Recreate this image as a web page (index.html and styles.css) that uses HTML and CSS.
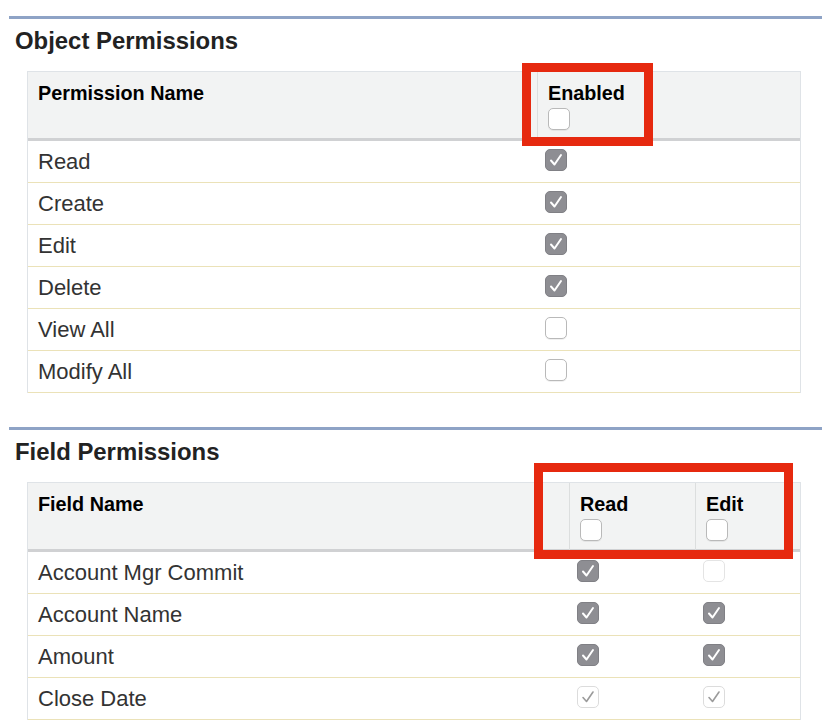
FILE: index.html
```html
<!DOCTYPE html>
<html lang="en">
<head>
<meta charset="utf-8">
<title>Permissions</title>
<link rel="stylesheet" href="styles.css">
</head>
<body>
<section class="section">
  <div class="rule"></div>
  <h2 class="title">Object Permissions</h2>
  <div class="grid">
    <table class="perm">
      <thead>
        <tr>
          <th class="name name-obj">Permission Name</th>
          <th class="col">Enabled<span class="cb cb-head"></span></th>
        </tr>
      </thead>
      <tbody>
        <tr><td class="label">Read</td><td class="box"><span class="cb cb-on"><svg viewBox="0 0 22 22"><path d="M6 11.5l3.5 4L16 6"/></svg></span></td></tr>
        <tr><td class="label">Create</td><td class="box"><span class="cb cb-on"><svg viewBox="0 0 22 22"><path d="M6 11.5l3.5 4L16 6"/></svg></span></td></tr>
        <tr><td class="label">Edit</td><td class="box"><span class="cb cb-on"><svg viewBox="0 0 22 22"><path d="M6 11.5l3.5 4L16 6"/></svg></span></td></tr>
        <tr><td class="label">Delete</td><td class="box"><span class="cb cb-on"><svg viewBox="0 0 22 22"><path d="M6 11.5l3.5 4L16 6"/></svg></span></td></tr>
        <tr><td class="label">View All</td><td class="box"><span class="cb cb-off"></span></td></tr>
        <tr><td class="label">Modify All</td><td class="box"><span class="cb cb-off"></span></td></tr>
      </tbody>
    </table>
  </div>
</section>

<section class="section section-2">
  <div class="rule"></div>
  <h2 class="title">Field Permissions</h2>
  <div class="grid">
    <table class="perm">
      <thead>
        <tr>
          <th class="name name-field">Field Name</th>
          <th class="col col-read">Read<span class="cb cb-head"></span></th>
          <th class="col">Edit<span class="cb cb-head"></span></th>
        </tr>
      </thead>
      <tbody>
        <tr><td class="label">Account Mgr Commit</td><td class="box"><span class="cb cb-on"><svg viewBox="0 0 22 22"><path d="M6 11.5l3.5 4L16 6"/></svg></span></td><td class="box"><span class="cb cb-dis"></span></td></tr>
        <tr><td class="label">Account Name</td><td class="box"><span class="cb cb-on"><svg viewBox="0 0 22 22"><path d="M6 11.5l3.5 4L16 6"/></svg></span></td><td class="box"><span class="cb cb-on"><svg viewBox="0 0 22 22"><path d="M6 11.5l3.5 4L16 6"/></svg></span></td></tr>
        <tr><td class="label">Amount</td><td class="box"><span class="cb cb-on"><svg viewBox="0 0 22 22"><path d="M6 11.5l3.5 4L16 6"/></svg></span></td><td class="box"><span class="cb cb-on"><svg viewBox="0 0 22 22"><path d="M6 11.5l3.5 4L16 6"/></svg></span></td></tr>
        <tr><td class="label">Close Date</td><td class="box"><span class="cb cb-dis-on"><svg viewBox="0 0 22 22"><path d="M6 11.5l3.5 4L16 6"/></svg></span></td><td class="box"><span class="cb cb-dis-on"><svg viewBox="0 0 22 22"><path d="M6 11.5l3.5 4L16 6"/></svg></span></td></tr>
      </tbody>
    </table>
  </div>
</section>

<div class="highlight highlight-1"></div>
<div class="highlight highlight-2"></div>
</body>
</html>
```

FILE: styles.css
```css
html {
  overflow: hidden;
}

body {
  margin: 0;
  padding-top: 16px;
  background: #ffffff;
  font-family: "Liberation Sans", Arial, Helvetica, sans-serif;
  color: #333333;
  position: relative;
  min-height: 704px;
}

.section-2 {
  margin-top: 34px;
}

.rule {
  margin-left: 9px;
  height: 3px;
  background: #8ea3c6;
}

.title {
  margin: 8px 0 0 15px;
  font-size: 23.9px;
  line-height: 28px;
  font-weight: bold;
  color: #222222;
}

.grid {
  margin: 16px 0 0 27px;
  width: 774px;
  box-sizing: border-box;
  border: 1px solid #dfe3e7;
  border-bottom: 0;
}

.perm {
  width: 100%;
  border-collapse: separate;
  border-spacing: 0;
  table-layout: fixed;
}

.perm th {
  box-sizing: border-box;
  background: #f2f3f3;
  padding: 9px 9px 8px 10px;
  border-bottom: 3px solid #d0d1d3;
  vertical-align: top;
  text-align: left;
  font-size: 19.8px;
  line-height: 24px;
  font-weight: bold;
  color: #000000;
}

.perm .name-obj {
  width: 509px;
}

.perm .name-field {
  width: 541px;
}

.perm .col {
  border-left: 1px solid #dcdede;
}

.perm .col-read {
  width: 126px;
}

.perm td {
  height: 25px;
  padding: 8px 9px 8px 10px;
  border-bottom: 1px solid #ebe2b8;
  font-size: 22px;
  line-height: 25px;
  color: #333333;
  vertical-align: middle;
}

.perm td.box {
  padding-left: 8px;
  font-size: 0;
}

.cb {
  display: inline-block;
  vertical-align: middle;
  width: 22px;
  height: 22px;
  box-sizing: border-box;
  border-radius: 5px;
  background: #ffffff;
}

.box .cb {
  position: relative;
  top: -1px;
}

.cb svg {
  display: block;
  width: 100%;
  height: 100%;
}

.cb path {
  fill: none;
  stroke: #ffffff;
  stroke-width: 2;
  stroke-linecap: round;
  stroke-linejoin: round;
}

.cb-head {
  display: block;
  margin: 3px 0 0 0;
  border: 1px solid #b9b9b9;
  box-shadow: 0 1px 0 rgba(0, 0, 0, 0.06);
}

.cb-off {
  border: 1px solid #b9b9b9;
  box-shadow: 0 1px 0 rgba(0, 0, 0, 0.06);
}

.cb-on {
  background: #8e8e93;
  border: 1px solid #808085;
}

.cb-on svg {
  margin: -1px;
  width: 22px;
  height: 22px;
}

.cb-dis {
  border: 1px solid #e4e4e4;
}

.cb-dis-on {
  border: 1px solid #dcdcdc;
}

.cb-dis-on svg {
  margin: -1px;
  width: 22px;
  height: 22px;
}

.cb-dis-on path {
  stroke: #9b9b9b;
  stroke-width: 1.6;
}

.highlight {
  position: absolute;
  box-sizing: border-box;
  border: 9px solid #e6290f;
}

.highlight-1 {
  left: 522px;
  top: 63px;
  width: 131px;
  height: 83px;
}

.highlight-2 {
  left: 534px;
  top: 463px;
  width: 259px;
  height: 96px;
}
```
